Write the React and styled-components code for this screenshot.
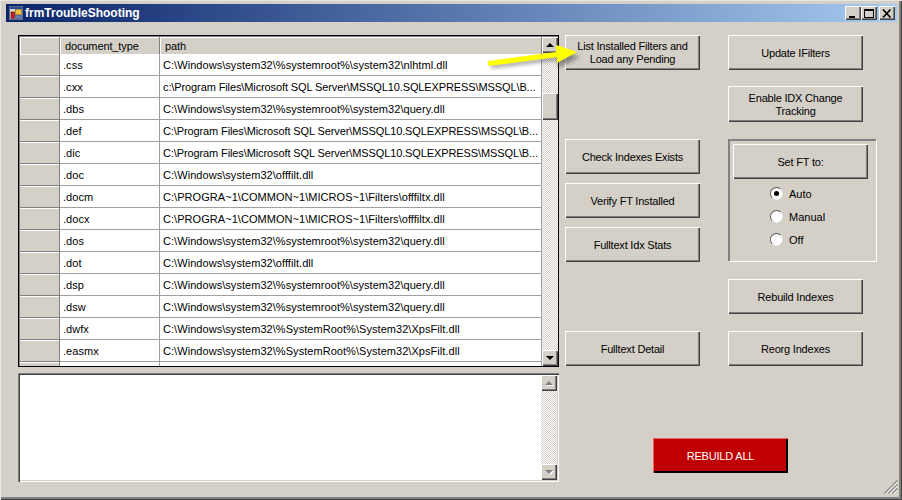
import React from "react";
import styled, { createGlobalStyle, css } from "styled-components";

const Global = createGlobalStyle`
  html, body { margin: 0; padding: 0; background: #d4d0c8; }
  body { width: 902px; height: 500px; overflow: hidden; font-family: "Liberation Sans", Arial, sans-serif; font-size: 11px; color: #000; }
`;

const raised = css`
  background: #d4d0c8;
  box-shadow: inset 1px 1px 0 #ffffff, inset -1px -1px 0 #404040, inset -2px -2px 0 #808080;
`;

const Window = styled.div`
  position: relative;
  box-sizing: border-box;
  width: 902px;
  height: 500px;
  padding: 4px 5px 4px 6px;
  background: #d4d0c8;
  box-shadow: inset 1px 1px 0 #e8e6e0, inset -1px -1px 0 #404040, inset -2px -2px 0 #808080, inset -3px -3px 0 #808080;
`;
const TitleBar = styled.div`
  height: 18px;
  display: flex;
  align-items: center;
  padding: 0 2px 0 3px;
  gap: 2px;
  background: linear-gradient(90deg, #0a246a 0%, #a6caf0 100%);
`;
const TitleText = styled.div`
  flex: 1;
  color: #fff;
  font: bold 12px "Liberation Sans", sans-serif;
`;
const CaptionGroup = styled.div`
  display: flex;
  align-items: center;
`;
const CaptionButton = styled.div`
  ${raised}
  width: 16px;
  height: 14px;
  margin-left: ${(p) => p.$gap || 0}px;
  display: flex;
  align-items: center;
  justify-content: center;
`;
const Client = styled.div`
  display: flex;
  padding: 13px 0 0 12px;
  gap: 6px;
`;
const LeftCol = styled.div`
  width: 541px;
  display: flex;
  flex-direction: column;
  gap: 6px;
`;
const GridBox = styled.div`
  box-sizing: border-box;
  height: 332px;
  display: flex;
  border: 1px solid #000;
  box-shadow: inset 1px 1px 0 #808080;
  background: #d4d0c8;
  padding: 1px 0 0 1px;
  overflow: hidden;
`;
const GridBody = styled.div`
  width: 522px;
  flex: none;
  overflow: hidden;
`;
const RowLine = styled.div`
  display: grid;
  grid-template-columns: 40px 100px 382px;
  height: ${(p) => (p.$head ? 17 : 22)}px;
`;
const RowHeader = styled.div`
  background: #d4d0c8;
  border-right: 1px solid #808080;
  border-bottom: 1px solid #808080;
  box-shadow: inset 0 1px 0 #fff;
`;
const HeadCell = styled.div`
  background: #d4d0c8;
  border-bottom: 1px solid #808080;
  border-right: 1px solid #808080;
  box-shadow: inset 1px 1px 0 #fff;
  padding-left: 5px;
  line-height: 18px;
  letter-spacing: -0.12px;
  white-space: nowrap;
`;
const Cell = styled.div`
  background: #fff;
  border-bottom: 1px solid #a0a0a0;
  border-right: 1px solid #a0a0a0;
  padding-left: 3px;
  line-height: 23px;
  letter-spacing: ${(p) => (p.$tight ? "-0.11px" : "0.05px")};
  white-space: nowrap;
  overflow: hidden;
`;
const ScrollBar = styled.div`
  width: 16px;
  flex: none;
  display: flex;
  flex-direction: column;
  background-color: #e9e7e2;
  background-image: conic-gradient(#fff 25%, #d4d0c8 0 50%, #fff 0 75%, #d4d0c8 0);
  background-size: 2px 2px;
`;
const ScrollBtn = styled.div`
  ${raised}
  height: 16px;
  flex: none;
  display: flex;
  align-items: center;
  justify-content: center;
`;
const Track = styled.div`
  flex: 1;
  display: flex;
  flex-direction: column;
`;
const Thumb = styled.div`
  ${raised}
  height: 27px;
  margin-top: ${(p) => p.$offset}px;
`;
const Arrow = styled.div`
  width: 0;
  height: 0;
  border-left: 4px solid transparent;
  border-right: 4px solid transparent;
  ${(p) => (p.$up ? "border-bottom" : "border-top")}: 4px solid ${(p) => (p.$muted ? "#808080" : "#000")};
  ${(p) => p.$muted && "filter: drop-shadow(1px 1px 0 #fff);"}
`;
const TextArea = styled.div`
  box-sizing: border-box;
  height: 109px;
  display: flex;
  justify-content: flex-end;
  background: #fff;
  padding: 2px;
  box-shadow: inset 1px 1px 0 #808080, inset 2px 2px 0 #404040, inset -1px -1px 0 #fff, inset -2px -2px 0 #d4d0c8;
`;
const Stack = styled.div`
  width: ${(p) => p.$w}px;
  display: flex;
  flex-direction: column;
`;
const RightPane = styled.div`
  display: flex;
  flex-direction: column;
`;
const Columns = styled.div`
  display: flex;
  gap: 28px;
`;
const Button = styled.div`
  ${raised}
  box-sizing: border-box;
  width: 135px;
  height: ${(p) => p.$h || 35}px;
  margin-top: ${(p) => p.$top || 0}px;
  flex: none;
  display: flex;
  align-items: center;
  justify-content: center;
  text-align: center;
  line-height: 13px;
  letter-spacing: -0.2px;
  padding: 1px 8px 0;
`;
const Danger = styled(Button)`
  background: #c00000;
  color: #fff;
  margin: 72px 0 0 88px;
  box-shadow: inset 1px 1px 0 #f06060, inset -1px -1px 0 #000, inset -2px -2px 0 #000;
`;
const Group = styled.div`
  box-sizing: border-box;
  width: 149px;
  height: 123px;
  margin-top: ${(p) => p.$top}px;
  padding: 4px 0 0 4px;
  border: 1px solid;
  border-color: #808080 #fff #fff #808080;
  box-shadow: inset 1px 1px 0 #808080;
`;
const Radios = styled.div`
  display: flex;
  flex-direction: column;
  gap: 10px;
  padding: 8px 0 0 37px;
`;
const RadioRow = styled.div`
  display: flex;
  align-items: center;
  gap: 6px;
  height: 13px;
`;
const Radio = styled.div`
  box-sizing: border-box;
  width: 13px;
  height: 13px;
  border-radius: 50%;
  background: #fff;
  border: 1px solid;
  border-color: #606060 #f0f0f0 #f0f0f0 #606060;
  box-shadow: 0 0 0 0.5px #c8c4bc;
  display: flex;
  align-items: center;
  justify-content: center;
`;
const Dot = styled.div`
  width: 5px;
  height: 5px;
  border-radius: 50%;
  background: #000;
`;
const Overlay = styled.svg`
  position: absolute;
  pointer-events: none;
`;

const rows = [
  [".css", "C:\\Windows\\system32\\%systemroot%\\system32\\nlhtml.dll"],
  [".cxx", "c:\\Program Files\\Microsoft SQL Server\\MSSQL10.SQLEXPRESS\\MSSQL\\B...", true],
  [".dbs", "C:\\Windows\\system32\\%systemroot%\\system32\\query.dll"],
  [".def", "C:\\Program Files\\Microsoft SQL Server\\MSSQL10.SQLEXPRESS\\MSSQL\\B...", true],
  [".dic", "C:\\Program Files\\Microsoft SQL Server\\MSSQL10.SQLEXPRESS\\MSSQL\\B...", true],
  [".doc", "C:\\Windows\\system32\\offfilt.dll"],
  [".docm", "C:\\PROGRA~1\\COMMON~1\\MICROS~1\\Filters\\offfiltx.dll"],
  [".docx", "C:\\PROGRA~1\\COMMON~1\\MICROS~1\\Filters\\offfiltx.dll"],
  [".dos", "C:\\Windows\\system32\\%systemroot%\\system32\\query.dll"],
  [".dot", "C:\\Windows\\system32\\offfilt.dll"],
  [".dsp", "C:\\Windows\\system32\\%systemroot%\\system32\\query.dll"],
  [".dsw", "C:\\Windows\\system32\\%systemroot%\\system32\\query.dll"],
  [".dwfx", "C:\\Windows\\system32\\%SystemRoot%\\System32\\XpsFilt.dll"],
  [".easmx", "C:\\Windows\\system32\\%SystemRoot%\\System32\\XpsFilt.dll"],
  ["", ""],
];

export default function App() {
  return (
    <>
      <Global />
      <Window>
        <TitleBar>
          <svg width="14" height="14" viewBox="0 0 14 14">
            <rect x="0.5" y="0.5" width="13" height="13" fill="#d4d0c8" stroke="#5a6a8a" />
            <rect x="1" y="1" width="12" height="2" fill="#2a4a9a" />
            <rect x="2" y="6" width="3.5" height="6.5" fill="#c02020" stroke="#601010" strokeWidth="0.6" />
            <rect x="6.5" y="3.5" width="6" height="5" fill="#f0c040" stroke="#806010" strokeWidth="0.6" />
            <rect x="6.5" y="9.5" width="6" height="3" fill="#6080c0" stroke="#304070" strokeWidth="0.6" />
          </svg>
          <TitleText>frmTroubleShooting</TitleText>
          <CaptionGroup>
            <CaptionButton>
              <svg width="10" height="9" viewBox="0 0 10 9"><rect x="1" y="7" width="6" height="2" fill="#000" /></svg>
            </CaptionButton>
            <CaptionButton>
              <svg width="10" height="9" viewBox="0 0 10 9"><rect x="0.5" y="0.5" width="9" height="8" fill="none" stroke="#000" /><rect x="0" y="0" width="10" height="2" fill="#000" /></svg>
            </CaptionButton>
            <CaptionButton $gap={2}>
              <svg width="10" height="9" viewBox="0 0 10 9"><path d="M1 0.5L8.5 8.5M8.5 0.5L1 8.5" stroke="#000" strokeWidth="1.6" /></svg>
            </CaptionButton>
          </CaptionGroup>
        </TitleBar>
        <Client>
          <LeftCol>
            <GridBox>
              <GridBody>
                <RowLine $head>
                  <HeadCell />
                  <HeadCell>document_type</HeadCell>
                  <HeadCell>path</HeadCell>
                </RowLine>
                {rows.map(([type, path, tight], i) => (
                  <RowLine key={i}>
                    <RowHeader />
                    <Cell>{type}</Cell>
                    <Cell $tight={tight}>{path}</Cell>
                  </RowLine>
                ))}
              </GridBody>
              <ScrollBar>
                <ScrollBtn><Arrow $up /></ScrollBtn>
                <Track><Thumb $offset={40} /></Track>
                <ScrollBtn><Arrow /></ScrollBtn>
              </ScrollBar>
            </GridBox>
            <TextArea>
              <ScrollBar>
                <ScrollBtn><Arrow $up $muted /></ScrollBtn>
                <Track />
                <ScrollBtn><Arrow $muted /></ScrollBtn>
              </ScrollBar>
            </TextArea>
          </LeftCol>
          <RightPane>
            <Columns>
              <Stack $w={135}>
                <Button>List Installed Filters and Load any Pending</Button>
                <Button $top={69}>Check Indexes Exists</Button>
                <Button $top={9}>Verify FT Installed</Button>
                <Button $top={9}>Fulltext Idx Stats</Button>
                <Button $top={69}>Fulltext Detail</Button>
              </Stack>
              <Stack $w={149}>
                <Button>Update IFilters</Button>
                <Button $top={16} $h={36}>Enable IDX Change Tracking</Button>
                <Group $top={17}>
                  <Button>Set FT to:</Button>
                  <Radios>
                    <RadioRow><Radio><Dot /></Radio>Auto</RadioRow>
                    <RadioRow><Radio />Manual</RadioRow>
                    <RadioRow><Radio />Off</RadioRow>
                  </Radios>
                </Group>
                <Button $top={17}>Rebuild Indexes</Button>
                <Button $top={17}>Reorg Indexes</Button>
              </Stack>
            </Columns>
            <Danger>REBUILD ALL</Danger>
          </RightPane>
        </Client>
        <Overlay style={{ left: 480, top: 38 }} width="110" height="40" viewBox="480 38 110 40">
          <defs>
            <filter id="sh" x="-20%" y="-60%" width="140%" height="220%"><feGaussianBlur stdDeviation="2" /></filter>
          </defs>
          <path d="M491 68L558 60V68L580 57L558 50V56L491 64Z" fill="#404040" opacity="0.55" filter="url(#sh)" />
          <path d="M488 61L556 52V45L577 52L557 63V57L488 66Z" fill="#ffff00" />
        </Overlay>
        <Overlay style={{ right: 4, bottom: 6 }} width="14" height="14" viewBox="0 0 14 14">
          <path d="M0.5 13.5L13.5 0.5M4.5 13.5L13.5 4.5M8.5 13.5L13.5 8.5" stroke="#808080" strokeWidth="1.2" />
          <path d="M2 13.5L13.5 2M6 13.5L13.5 6M10 13.5L13.5 10" stroke="#fff" strokeWidth="1" />
        </Overlay>
      </Window>
    </>
  );
}
